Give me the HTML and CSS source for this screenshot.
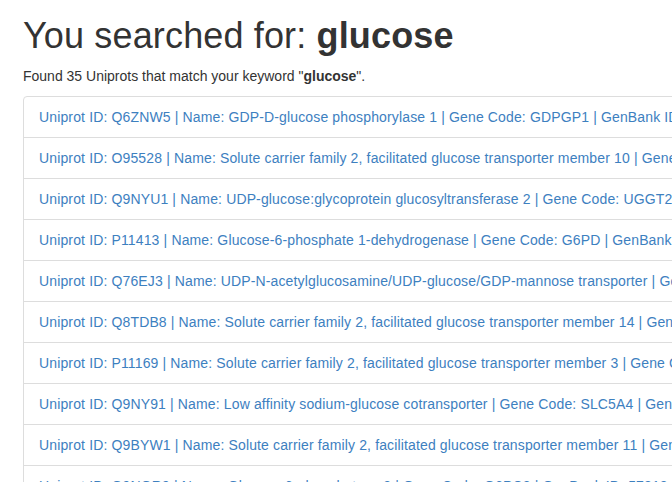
FILE: index.html
```html
<!DOCTYPE html>
<html>
<head>
<meta charset="utf-8">
<title>Search results</title>
<link rel="stylesheet" href="styles.css">
</head>
<body>
<div class="container">
  <h1 class="title">You searched for: <strong>glucose</strong></h1>
  <p class="summary">Found 35 Uniprots that match your keyword "<strong>glucose</strong>".</p>
  <div class="list-group">
    <a class="list-group-item" href="#">Uniprot ID: Q6ZNW5 | Name: GDP-D-glucose phosphorylase 1 | Gene Code: GDPGP1 | GenBank ID: 390637</a>
    <a class="list-group-item" href="#">Uniprot ID: O95528 | Name: Solute carrier family 2, facilitated glucose transporter member 10 | Gene Code: SLC2A10 | GenBank ID: 81031</a>
    <a class="list-group-item" href="#">Uniprot ID: Q9NYU1 | Name: UDP-glucose:glycoprotein glucosyltransferase 2 | Gene Code: UGGT2 | GenBank ID: 55757</a>
    <a class="list-group-item" href="#">Uniprot ID: P11413 | Name: Glucose-6-phosphate 1-dehydrogenase | Gene Code: G6PD | GenBank ID: 2539</a>
    <a class="list-group-item" href="#">Uniprot ID: Q76EJ3 | Name: UDP-N-acetylglucosamine/UDP-glucose/GDP-mannose transporter | Gene Code: SLC35D2 | GenBank ID: 11046</a>
    <a class="list-group-item" href="#">Uniprot ID: Q8TDB8 | Name: Solute carrier family 2, facilitated glucose transporter member 14 | Gene Code: SLC2A14 | GenBank ID: 144195</a>
    <a class="list-group-item" href="#">Uniprot ID: P11169 | Name: Solute carrier family 2, facilitated glucose transporter member 3 | Gene Code: SLC2A3 | GenBank ID: 6515</a>
    <a class="list-group-item" href="#">Uniprot ID: Q9NY91 | Name: Low affinity sodium-glucose cotransporter | Gene Code: SLC5A4 | GenBank ID: 6527</a>
    <a class="list-group-item" href="#">Uniprot ID: Q9BYW1 | Name: Solute carrier family 2, facilitated glucose transporter member 11 | Gene Code: SLC2A11 | GenBank ID: 66035</a>
    <a class="list-group-item" href="#">Uniprot ID: Q9NQR9 | Name: Glucose-6-phosphatase 3 | Gene Code: G6PC3 | GenBank ID: 57818</a>
  </div>
</div>
</body>
</html>
```
FILE: styles.css
```css
html, body {
  margin: 0;
  padding: 0;
  overflow: hidden;
  background: #fff;
}
body {
  font-family: "Liberation Sans", Arial, sans-serif;
  font-size: 14px;
  line-height: 20px;
  color: #333;
}
.container {
  padding-left: 23px;
  width: 1200px;
}
.title {
  font-size: 36px;
  font-weight: 400;
  line-height: 1.1;
  margin: 16px 0 10px;
  letter-spacing: 0.15px;
}
.title strong {
  font-weight: 700;
}
.summary {
  margin: 0 0 10px;
}
.list-group {
  display: flex;
  flex-direction: column;
}
.list-group-item {
  display: block;
  padding: 10px 15px;
  margin-bottom: -1px;
  border: 1px solid #ddd;
  color: #3d80bf;
  text-decoration: none;
  white-space: nowrap;
  letter-spacing: 0.14px;
  background: #fff;
}
.list-group-item:first-child {
  border-top-left-radius: 4px;
  border-top-right-radius: 4px;
}
```
